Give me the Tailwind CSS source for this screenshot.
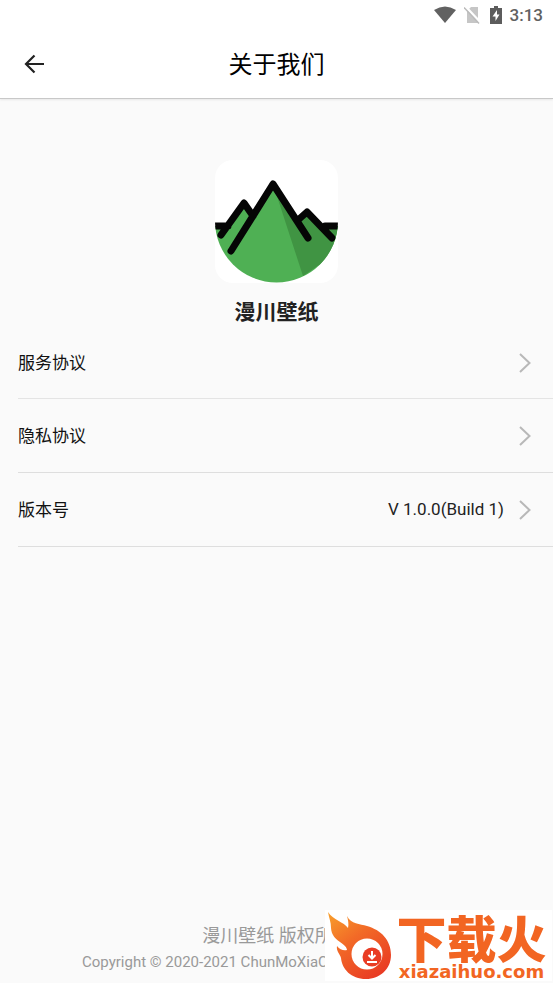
<!DOCTYPE html>
<html lang="zh-CN">
<head>
<meta charset="utf-8">
<meta name="viewport" content="width=device-width, initial-scale=1">
<title>关于我们</title>
<script src="https://cdn.jsdelivr.net/npm/@tailwindcss/browser@4"></script>
</head>
<body class="relative flex min-h-screen flex-col bg-[#fafafa] font-[Roboto,'Noto_Sans_CJK_SC',sans-serif] text-[#111]">
<header class="border-b border-[#c8c8c8] bg-white shadow-[0_1px_2px_rgba(0,0,0,0.08)]">
  <div class="flex h-[30px] items-center justify-end pr-[10px] text-[#616161]">
    <svg class="mr-2 h-[18px] w-[22px]" viewBox="0 0 22 18" fill="currentColor" aria-hidden="true"><path d="M0 4Q11-3 22 4L11 17Z"/></svg>
    <svg class="mr-[9px] h-[18px] w-[17px]" viewBox="0 0 17 18" aria-hidden="true"><path d="M3 5 7 1H14V17H3Z" fill="#c6c6c6"/><path d="M2 1 17 17" stroke="#fff" stroke-width="2.500"/><path d="M0 1.500 15 17.500" stroke="#bbb" stroke-width="1.500"/></svg>
    <svg class="mr-2 h-[18px] w-3" viewBox="0 0 12 18" aria-hidden="true"><path d="M4 0H8V2H12V18H0V2H4Z" fill="#5c5c5c"/><path d="M7 4 2.500 10.500H5.500V15L9.500 8.500H7Z" fill="#fff"/></svg>
    <span class="text-[17px] leading-none font-medium">3:13</span>
  </div>
  <div class="grid h-[68px] grid-cols-[68px_1fr_68px] items-center">
    <button type="button" aria-label="返回" class="flex h-12 items-center justify-center">
      <svg class="size-6" viewBox="0 0 24 24" fill="none" stroke="#222" stroke-width="2.200" aria-hidden="true"><path d="M22 12H4M12.500 3.500 4 12l8.500 8.500"/></svg>
    </button>
    <h1 class="pt-[2px] text-center text-2xl text-black">关于我们</h1>
  </div>
</header>
<main class="flex flex-1 flex-col">
  <section class="flex flex-col items-center pt-[61px]">
    <svg class="size-[123px] rounded-[18px] bg-white" viewBox="0 0 123 123" role="img" aria-label="漫川壁纸">
      <defs><clipPath id="disc"><path d="M0 61A61.500 61.500 0 0 0 123 61V0H0Z"/></clipPath></defs>
      <g clip-path="url(#disc)">
        <path d="M0 66H14L29 43 39 54 58 24 86 66 92 52 106 66H123V123H0Z" fill="#4fb054"/>
        <path d="M58 24 88 116 123 92V66H106L92 52 83 62Z" fill="#409443"/>
        <path d="M0 66H13M110 66H123M6 75 29 43 38 56M16 91 58 24 93 78M83 60 92 52 117 78" fill="none" stroke="#050505" stroke-width="7" stroke-linecap="round" stroke-linejoin="round"/>
      </g>
    </svg>
    <h2 class="mt-[14px] text-[21px] leading-[30px] font-bold text-[#222]">漫川壁纸</h2>
  </section>
  <nav class="pl-[18px] text-[17px]">
    <a href="#service" class="flex h-[72px] items-center justify-between border-b border-[#e4e4e4] pr-[22px]"><span class="pt-[2px]">服务协议</span>
      <svg class="h-5 w-3" viewBox="0 0 12 20" fill="none" stroke="#b8b8b8" stroke-width="2" aria-hidden="true"><path d="M1 1 10.500 10 1 19"/></svg></a>
    <a href="#privacy" class="flex h-[74px] items-center justify-between border-b border-[#dedede] pr-[22px]"><span class="pt-[2px]">隐私协议</span>
      <svg class="h-5 w-3" viewBox="0 0 12 20" fill="none" stroke="#b8b8b8" stroke-width="2" aria-hidden="true"><path d="M1 1 10.500 10 1 19"/></svg></a>
    <a href="#version" class="flex h-[74px] items-center border-b border-[#dedede] pr-[22px]"><span class="pt-[2px]">版本号</span><span class="mr-[15px] ml-auto text-[#222]">V 1.0.0(Build 1)</span>
      <svg class="h-5 w-3" viewBox="0 0 12 20" fill="none" stroke="#b8b8b8" stroke-width="2" aria-hidden="true"><path d="M1 1 10.500 10 1 19"/></svg></a>
  </nav>
</main>
<footer class="pb-[11px] text-[#999]">
  <p class="pb-[2px] text-center text-lg leading-7">漫川壁纸 版权所有</p>
  <p class="pl-[82px] text-[15px] leading-5 whitespace-nowrap">Copyright © 2020-2021 ChunMoXiaC</p>
</footer>
<aside class="absolute right-px bottom-[2px] flex h-[71px] w-[227px] bg-white text-[#f26522]">
  <svg class="h-[71px] w-[66px] shrink-0" viewBox="0 0 66 71" aria-hidden="true">
    <defs><linearGradient id="flame" x1="0" y1="0" x2="0.700" y2="1"><stop stop-color="#f8a02c"/><stop offset=".45" stop-color="#f26a27"/><stop offset="1" stop-color="#e93c24"/></linearGradient></defs>
    <path d="M3 2C8 10 19 12 23 18 24 14 23 10 22 6 26 14 35 14 42 16 56 20 66 30 66 45 66 59 55 69 41 69 26 69 17 59 16 48 15 44 11 41 12 36 15 40 19 41 22 40 21 32 7 32 6 18 6 12 4 8 3 2Z" fill="url(#flame)"/>
    <circle cx="42" cy="44" r="15.500" fill="#fff"/><circle cx="47" cy="47" r="9.500" fill="#e93c24"/>
    <path d="M47 41V48M43.500 45 47 48.500 50.500 45M42 52H52" fill="none" stroke="#fff" stroke-width="2"/>
  </svg>
  <div class="flex flex-1 flex-col items-center pt-2">
    <strong class="text-[50px] leading-[46px] font-black whitespace-nowrap">下载火</strong>
    <span class="font-['DejaVu_Sans',sans-serif] text-[18px] leading-4 font-bold">xiazaihuo.com</span>
  </div>
</aside>
</body>
</html>
